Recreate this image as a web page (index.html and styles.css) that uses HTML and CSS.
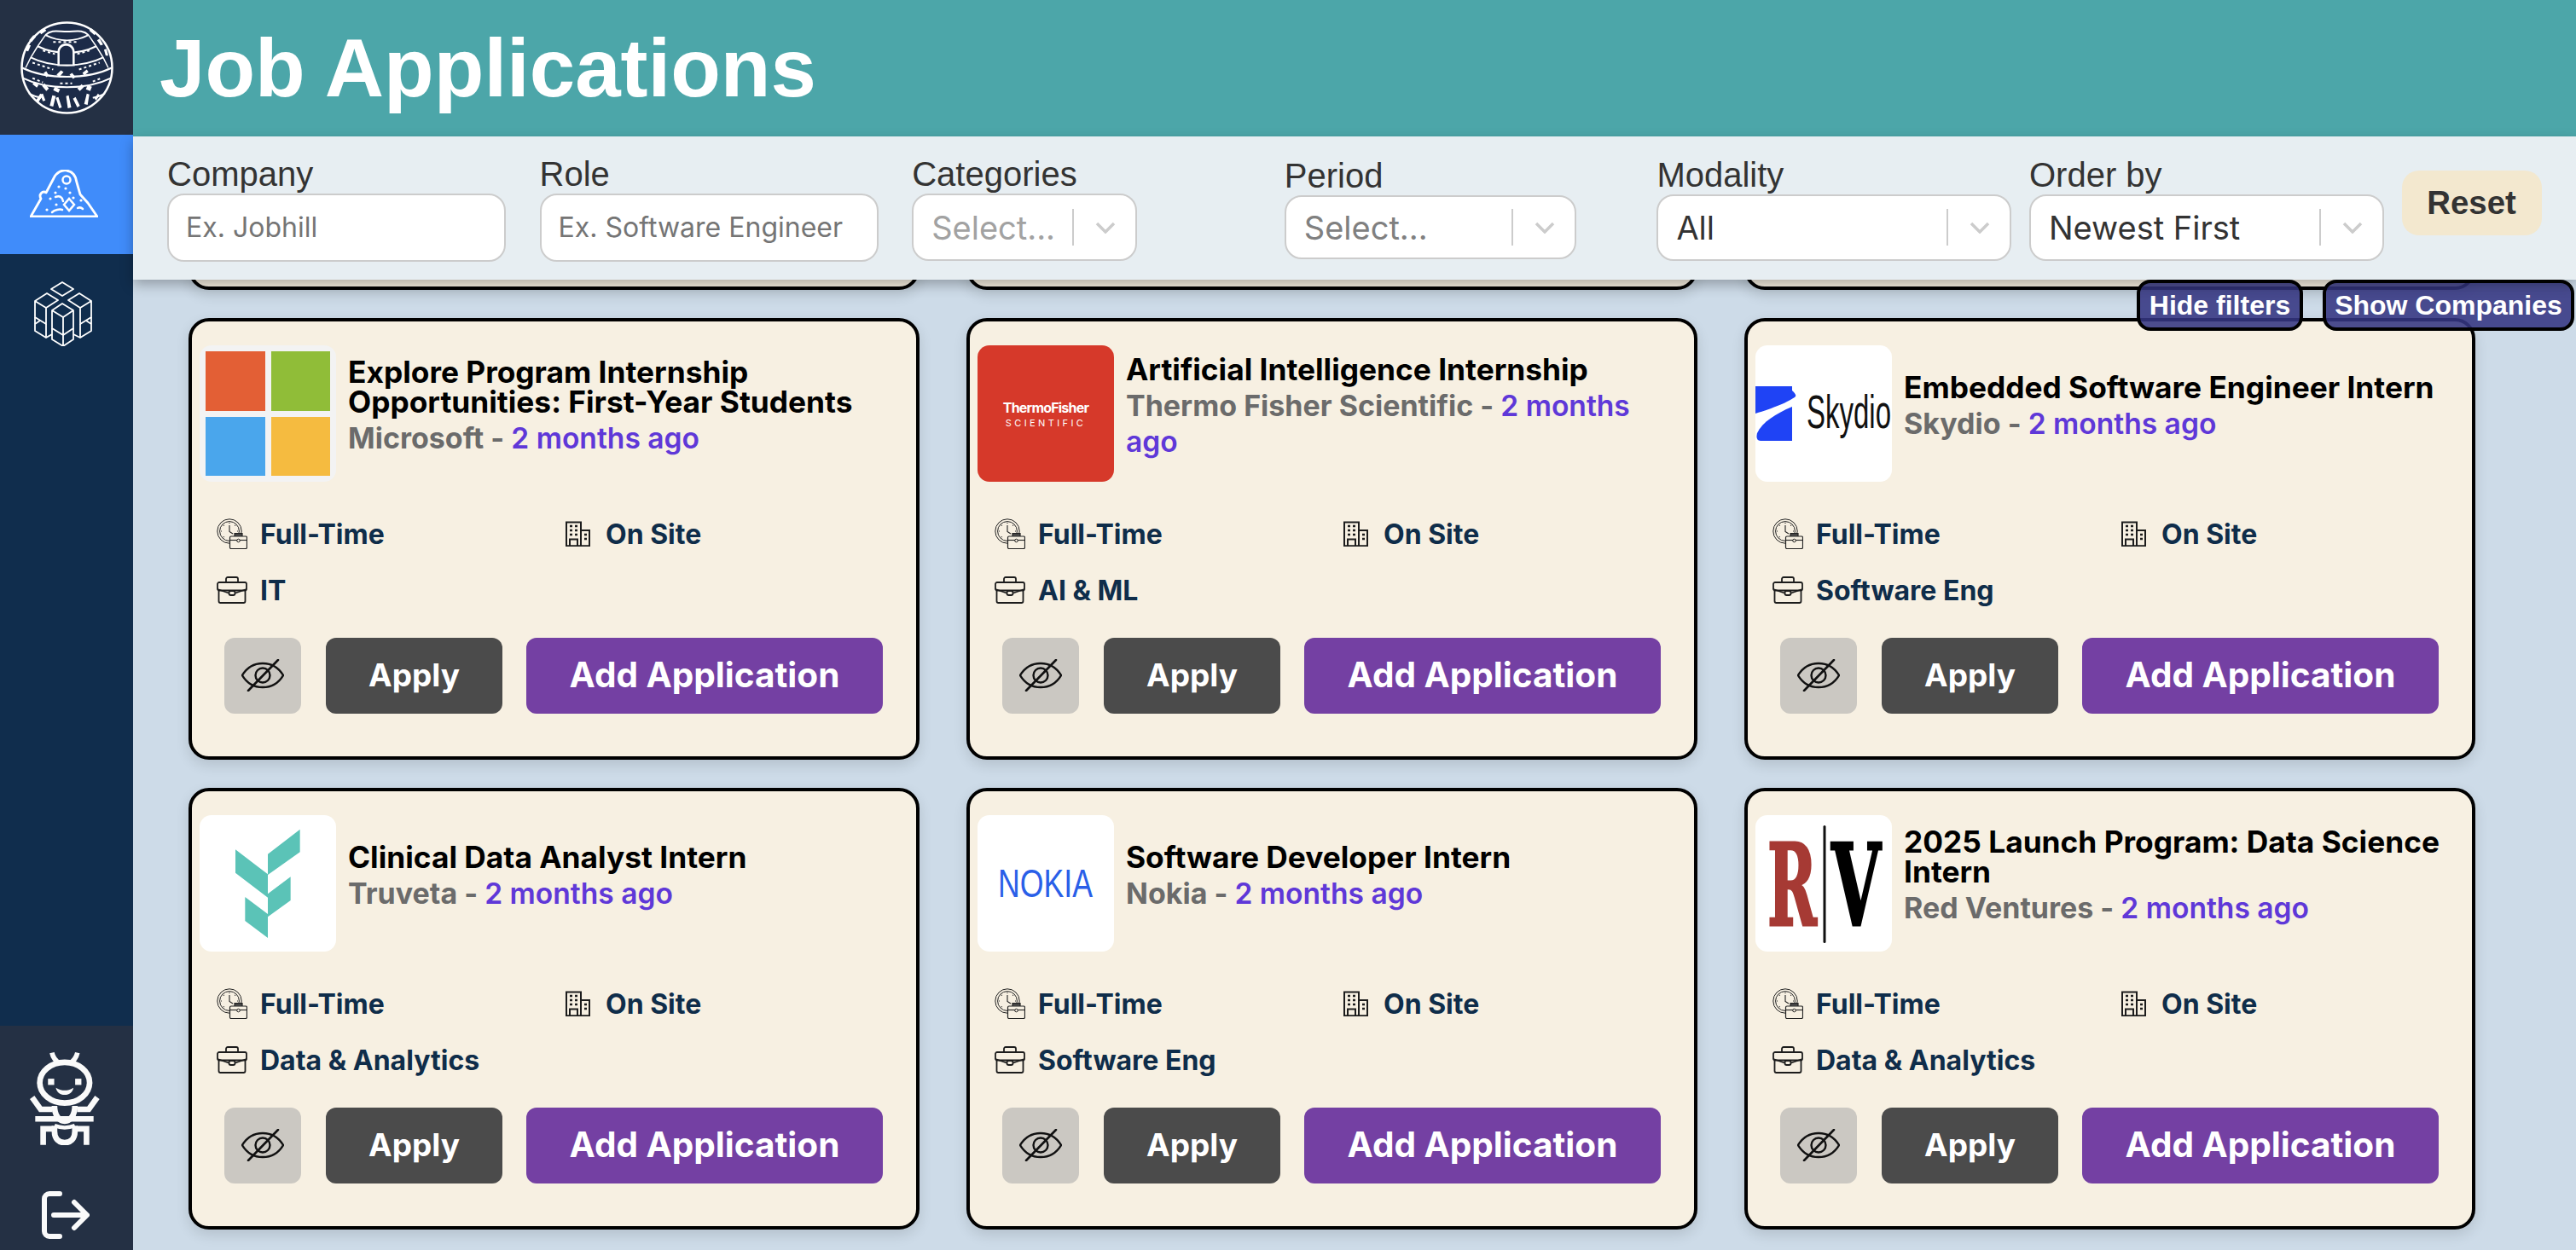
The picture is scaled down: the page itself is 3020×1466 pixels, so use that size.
FILE: index.html
```html
<!DOCTYPE html>
<html lang="en">
<head>
<meta charset="utf-8">
<title>Job Applications</title>
<link rel="stylesheet" href="styles.css">
</head>
<body>
<svg class="sprites" width="0" height="0" aria-hidden="true">
  <defs>
    <symbol id="i-clock" viewBox="0 0 36 36">
      <circle cx="15" cy="15" r="14.2" fill="none" stroke="#222" stroke-width="1"/>
      <circle cx="15" cy="15" r="11.4" fill="none" stroke="#222" stroke-width="1"/>
      <path d="M15 8v7.5l4 2.5M15 5v1M5 15h1M24 15h1M8 8l.7.7M22 8l-.7.7M8 22l.7-.7" fill="none" stroke="#222" stroke-width="1.1"/>
      <rect x="15.5" y="21" width="20" height="14.5" rx="1.5" fill="#f7f0e2" stroke="#222" stroke-width="1.2"/>
      <path d="M21 21v-3.5h9V21" fill="#444" stroke="#222" stroke-width="1.2"/>
      <path d="M15.5 25.5h20" stroke="#222" stroke-width="1.1"/>
      <circle cx="25.5" cy="26" r="1.8" fill="#f7f0e2" stroke="#222" stroke-width="1"/>
    </symbol>
    <symbol id="i-building" viewBox="0 0 29 30">
      <path d="M1 29V1.500h17V29M18 11h10v18M0 29.200h29" fill="none" stroke="#1c1c1c" stroke-width="2"/>
      <path d="M5 6h3M11 6h3M5 11h3M11 11h3M5 16h3M11 16h3M22 16h3M22 21h3" stroke="#1c1c1c" stroke-width="2.400"/>
      <path d="M5 29v-7.500h9V29" fill="none" stroke="#1c1c1c" stroke-width="2"/>
    </symbol>
    <symbol id="i-brief" viewBox="0 0 36 32">
      <path d="M11 7V3a2 2 0 0 1 2-2h10a2 2 0 0 1 2 2v4" fill="none" stroke="#1c1c1c" stroke-width="1.800"/>
      <rect x="1" y="7" width="34" height="9.500" rx="2" fill="none" stroke="#1c1c1c" stroke-width="1.800"/>
      <path d="M2.500 15v14a2 2 0 0 0 2 2h27a2 2 0 0 0 2-2V15" fill="none" stroke="#1c1c1c" stroke-width="1.800"/>
      <path d="M1 15l13 4.500M35 15l-13 4.500" fill="none" stroke="#1c1c1c" stroke-width="1.800"/>
      <rect x="14.500" y="17" width="7" height="5" rx="2" fill="#f7f0e2" stroke="#1c1c1c" stroke-width="1.800"/>
    </symbol>
    <symbol id="i-eye" viewBox="0 0 50 38">
      <path d="M1 19C7 9 15 5 25 5s18 4 24 14c-6 10-14 14-24 14S7 29 1 19Z" fill="none" stroke="#111" stroke-width="2.400" stroke-linejoin="round"/>
      <circle cx="25" cy="19" r="8.500" fill="none" stroke="#111" stroke-width="2.400"/>
      <path d="M43 1L8 37" fill="none" stroke="#111" stroke-width="2.600" stroke-linecap="round"/>
    </symbol>
  </defs>
</svg>

<aside class="sidebar">
  <div class="brand">
    <svg class="brand-logo" viewBox="0 0 108 108">
      <circle cx="54" cy="54" r="52.500" fill="#1c2b48" stroke="#fff" stroke-width="2.500"/>
      <g fill="none" stroke="#fff" stroke-width="2">
        <path d="M2 54c28 14 76 14 104 0M3 66c28 14 74 14 102 0M10 84c6 3 10 4 14 5M84 89c5-1 10-3 14-5"/>
        <path d="M12 42c24 12 60 12 84 0M20 29c20 10 48 10 68 0M29 16c16 8 34 8 50 0"/>
        <path d="M29 16C36 9 44 12 54 12s18-3 25 4"/>
        <path d="M29 16 20 29 12 42 6 54M79 16l9 13 8 13 6 12" stroke-width="1.500"/>
      </g>
      <path d="M43 52V36c0-14 20-14 20 0v16Z" fill="#fff"/>
      <path d="M45.500 50V36c0-10 15-10 15 0v14Z" fill="#1c2b48"/>
      <g fill="none" stroke="#fff" stroke-width="2" stroke-dasharray="3 3">
        <path d="M26 34l14 4M66 38l14-4M14 48l24 8M68 56l24-8M38 24l30 0M14 66l12 5M46 72h14M84 70l10-4"/>
      </g>
      <g fill="#fff">
        <path d="M22 12l6-4 2 3-6 4ZM82 8l6 5-2 3-6-5ZM10 22l5-6 3 2-5 6ZM92 20l4 7-3 1-4-6ZM6 34l3-7 3 1-3 7ZM100 32l2 8-3 0-2-7Z"/>
        <path d="M42 62l5-5 3 2-5 6ZM60 60l4 5-3 2-4-5ZM72 60l5-4 2 3-5 4ZM30 58l3 5-3 2-3-5ZM28 72l5 6-3 3-5-6ZM40 76l6 3-2 4-6-3ZM66 78l5-5 3 3-5 5ZM78 74l5 2-2 5-5-2ZM16 70l5 4-2 3-5-4Z"/>
        <path d="M18 92l5-8 3 2-5 8ZM34 98l3-12 4 1-3 12ZM44 88l4 12-3 1-4-12ZM56 86l3 14-4 1-2-14ZM64 88l5 10-3 2-5-10ZM74 96l3-12 3 1-2 12ZM86 90l4-6 2 2-4 6ZM26 84l3 8-3 1-3-8Z"/>
      </g>
    </svg>
  </div>
  <a class="nav-item nav-active" href="#">
    <svg class="icon-hill" viewBox="0 0 80 56">
      <path d="M1 55 13 34c-3-5 2-10 6-7L28 10C31 3 38 0 43 1c7 1 11 6 12 14l4 14 9 10 11 16Z" fill="none" stroke="#fff" stroke-width="2.800" stroke-linejoin="round"/>
      <circle cx="43" cy="12" r="4.500" fill="none" stroke="#fff" stroke-width="2.500"/>
      <path d="M46 34l6 7-6 7-6-7Z" fill="none" stroke="#fff" stroke-width="2.500"/>
      <path d="M30 32c5-2 8 0 9 5M62 46c-2-2-4-2-6-1M26 50c3-3 9-4 12-3" fill="none" stroke="#fff" stroke-width="2.500" stroke-linecap="round"/>
      <g fill="#fff"><circle cx="34" cy="20" r="1.600"/><circle cx="42" cy="22" r="1.600"/><circle cx="47" cy="27" r="1.600"/><circle cx="30" cy="27" r="1.600"/><circle cx="51" cy="33" r="1.600"/><circle cx="31" cy="41" r="1.600"/><circle cx="24" cy="34" r="1.600"/><circle cx="60" cy="36" r="1.600"/><circle cx="20" cy="47" r="1.600"/></g>
    </svg>
  </a>
  <a class="nav-item" href="#">
    <svg class="icon-cubes" viewBox="0 0 68 76">
      <g fill="none" stroke="#fff" stroke-width="1.800" stroke-linejoin="round">
        <path d="M33 1 46 9 33 17 20 9Z"/>
        <path d="M1 23 15 14l13 8-14 9ZM1 23v19l13 8V31"/>
        <path d="M40 22 53 14l14 9-13 8ZM67 23v19l-13 8V31"/>
        <path d="M21 34 33 26l13 8-12 8ZM21 34v21l13 8 12-8V34M34 42v21"/>
        <path d="M1 42v16l13 8 7-4M67 42v16l-13 8-8-4"/>
        <path d="M1 50l6-4M14 50v16M54 50v16M67 50l-6-4"/>
        <path d="M21 55v13l13 8 12-8V55M34 63v13"/>
      </g>
    </svg>
  </a>
  <div class="sidebar-fill"></div>
  <div class="sidebar-foot">
    <svg class="icon-ant" viewBox="105 158 247 330">
      <g fill="none" stroke="#fafafa" stroke-width="20">
        <ellipse cx="228" cy="268" rx="88" ry="72"/>
        <path d="M183 162c4 18 14 30 28 38M273 162c-4 18-14 30-28 38" stroke-width="17"/>
        <path d="M113 320l30 42h42M343 320l-30 42h-41"/>
        <path d="M124 396h206"/>
        <path d="M192 350c0 32 16 54 36 54s36-22 36-54"/>
        <path d="M192 420q36 14 72 0" stroke-width="14"/>
        <path d="M192 420v20c0 28 16 40 36 40s36-12 36-40v-20"/>
        <path d="M152 488v-57h34M305 488v-57h-34"/>
      </g>
      <rect x="169" y="254" width="22" height="22" fill="#fafafa"/>
      <rect x="265" y="254" width="22" height="22" fill="#fafafa"/>
      <path d="M197 286c12 8 22 9 31 9s20-1 31-9c-2 14-14 25-31 25s-29-11-31-25Z" fill="#fafafa"/>
    </svg>
    <svg class="icon-logout" viewBox="0 0 56 56">
      <path d="M21 3H9a6 6 0 0 0-6 6v38a6 6 0 0 0 6 6h12" fill="none" stroke="#fafafa" stroke-width="6" stroke-linecap="round"/>
      <path d="M14 28h38M38 13l15 15-15 15" fill="none" stroke="#fafafa" stroke-width="6" stroke-linecap="round" stroke-linejoin="round"/>
    </svg>
  </div>
</aside>

<main class="main">
  <header class="topbar"><h1 class="page-title">Job Applications</h1></header>

  <section class="filters">
    <div class="field">
      <label class="field-label">Company</label>
      <input class="text-input" placeholder="Ex. Jobhill">
    </div>
    <div class="field">
      <label class="field-label">Role</label>
      <input class="text-input" placeholder="Ex. Software Engineer">
    </div>
    <div class="field">
      <label class="field-label">Categories</label>
      <div class="select select-cat"><span class="select-value muted-light">Select...</span><span class="select-sep"></span><svg class="chev" viewBox="0 0 24 14"><path d="M2 2l10 10L22 2" fill="none" stroke="#ccc" stroke-width="3.500"/></svg></div>
    </div>
    <div class="field">
      <label class="field-label">Period</label>
      <div class="select select-period"><span class="select-value muted">Select...</span><span class="select-sep"></span><svg class="chev" viewBox="0 0 24 14"><path d="M2 2l10 10L22 2" fill="none" stroke="#ccc" stroke-width="3.500"/></svg></div>
    </div>
    <div class="field">
      <label class="field-label">Modality</label>
      <div class="select select-wide"><span class="select-value">All</span><span class="select-sep"></span><svg class="chev" viewBox="0 0 24 14"><path d="M2 2l10 10L22 2" fill="none" stroke="#ccc" stroke-width="3.500"/></svg></div>
    </div>
    <div class="field">
      <label class="field-label">Order by</label>
      <div class="select select-wide"><span class="select-value">Newest First</span><span class="select-sep"></span><svg class="chev" viewBox="0 0 24 14"><path d="M2 2l10 10L22 2" fill="none" stroke="#ccc" stroke-width="3.500"/></svg></div>
    </div>
    <button class="reset-btn">Reset</button>
  </section>

  <section class="content">
    <div class="floating">
      <button class="float-btn float-hide">Hide filters</button>
      <button class="float-btn float-show">Show Companies</button>
    </div>
    <div class="card-grid">
      <article class="card"></article>
      <article class="card"></article>
      <article class="card"></article>

      <article class="card">
        <div class="card-head">
          <div class="logo logo-ms"><svg viewBox="0 0 160 160"><rect x="7" y="7" width="70" height="70" fill="#e35f35"/><rect x="84" y="7" width="69" height="70" fill="#90bd38"/><rect x="7" y="84" width="70" height="69" fill="#4aa6ec"/><rect x="84" y="84" width="69" height="69" fill="#f5bb40"/></svg></div>
          <div class="card-text">
            <h2 class="job-title">Explore Program Internship Opportunities: First-Year Students</h2>
            <p class="job-sub"><span class="company">Microsoft - </span><span class="ago">2 months ago</span></p>
          </div>
        </div>
        <div class="meta">
          <div class="meta-item"><svg class="mi mi-clock"><use href="#i-clock"/></svg>Full-Time</div>
          <div class="meta-item"><svg class="mi mi-building"><use href="#i-building"/></svg>On Site</div>
          <div class="meta-item"><svg class="mi mi-brief"><use href="#i-brief"/></svg>IT</div>
        </div>
        <div class="actions">
          <button class="btn-eye"><svg class="eye"><use href="#i-eye"/></svg></button>
          <button class="btn-apply">Apply</button>
          <button class="btn-add">Add Application</button>
        </div>
      </article>

      <article class="card">
        <div class="card-head">
          <div class="logo logo-thermo"><span class="thermo-a">ThermoFisher</span><span class="thermo-b">SCIENTIFIC</span></div>
          <div class="card-text">
            <h2 class="job-title">Artificial Intelligence Internship</h2>
            <p class="job-sub"><span class="company">Thermo Fisher Scientific - </span><span class="ago">2 months ago</span></p>
          </div>
        </div>
        <div class="meta">
          <div class="meta-item"><svg class="mi mi-clock"><use href="#i-clock"/></svg>Full-Time</div>
          <div class="meta-item"><svg class="mi mi-building"><use href="#i-building"/></svg>On Site</div>
          <div class="meta-item"><svg class="mi mi-brief"><use href="#i-brief"/></svg>AI &amp; ML</div>
        </div>
        <div class="actions">
          <button class="btn-eye"><svg class="eye"><use href="#i-eye"/></svg></button>
          <button class="btn-apply">Apply</button>
          <button class="btn-add">Add Application</button>
        </div>
      </article>

      <article class="card">
        <div class="card-head">
          <div class="logo"><svg viewBox="0 0 160 160">
            <path d="M0 48H43V53C46 56 48 58 47 60 40 66 20 74 0 80Z" fill="#1f43f5"/>
            <path d="M43 72V112H6C1 112 1 107 2 103 8 90 24 80 43 72Z" fill="#1f43f5"/>
            <text class="svg-sky" x="60" y="97" textLength="99" lengthAdjust="spacingAndGlyphs">Skydio</text>
          </svg></div>
          <div class="card-text">
            <h2 class="job-title">Embedded Software Engineer Intern</h2>
            <p class="job-sub"><span class="company">Skydio - </span><span class="ago">2 months ago</span></p>
          </div>
        </div>
        <div class="meta">
          <div class="meta-item"><svg class="mi mi-clock"><use href="#i-clock"/></svg>Full-Time</div>
          <div class="meta-item"><svg class="mi mi-building"><use href="#i-building"/></svg>On Site</div>
          <div class="meta-item"><svg class="mi mi-brief"><use href="#i-brief"/></svg>Software Eng</div>
        </div>
        <div class="actions">
          <button class="btn-eye"><svg class="eye"><use href="#i-eye"/></svg></button>
          <button class="btn-apply">Apply</button>
          <button class="btn-add">Add Application</button>
        </div>
      </article>

      <article class="card">
        <div class="card-head">
          <div class="logo"><svg viewBox="42 45 480 480">
            <path d="M282 182 395 95V175L282 255ZM168 166 282 253V335L168 248ZM282 322 362 262V345L282 403ZM202 333 282 393V477L202 417Z" fill="#5bc3b7"/>
          </svg></div>
          <div class="card-text">
            <h2 class="job-title">Clinical Data Analyst Intern</h2>
            <p class="job-sub"><span class="company">Truveta - </span><span class="ago">2 months ago</span></p>
          </div>
        </div>
        <div class="meta">
          <div class="meta-item"><svg class="mi mi-clock"><use href="#i-clock"/></svg>Full-Time</div>
          <div class="meta-item"><svg class="mi mi-building"><use href="#i-building"/></svg>On Site</div>
          <div class="meta-item"><svg class="mi mi-brief"><use href="#i-brief"/></svg>Data &amp; Analytics</div>
        </div>
        <div class="actions">
          <button class="btn-eye"><svg class="eye"><use href="#i-eye"/></svg></button>
          <button class="btn-apply">Apply</button>
          <button class="btn-add">Add Application</button>
        </div>
      </article>

      <article class="card">
        <div class="card-head">
          <div class="logo"><svg viewBox="0 0 160 160">
            <text class="svg-nokia" x="24" y="96" textLength="111" lengthAdjust="spacingAndGlyphs">NOKIA</text>
          </svg></div>
          <div class="card-text">
            <h2 class="job-title">Software Developer Intern</h2>
            <p class="job-sub"><span class="company">Nokia - </span><span class="ago">2 months ago</span></p>
          </div>
        </div>
        <div class="meta">
          <div class="meta-item"><svg class="mi mi-clock"><use href="#i-clock"/></svg>Full-Time</div>
          <div class="meta-item"><svg class="mi mi-building"><use href="#i-building"/></svg>On Site</div>
          <div class="meta-item"><svg class="mi mi-brief"><use href="#i-brief"/></svg>Software Eng</div>
        </div>
        <div class="actions">
          <button class="btn-eye"><svg class="eye"><use href="#i-eye"/></svg></button>
          <button class="btn-apply">Apply</button>
          <button class="btn-add">Add Application</button>
        </div>
      </article>

      <article class="card">
        <div class="card-head">
          <div class="logo"><svg viewBox="0 0 160 160">
            <text class="svg-rv svg-r" x="14" y="129" textLength="58" lengthAdjust="spacingAndGlyphs">R</text>
            <rect x="79.500" y="12" width="3" height="138" rx="1.500" fill="#111"/>
            <text class="svg-rv svg-v" x="89" y="129" textLength="58" lengthAdjust="spacingAndGlyphs">V</text>
          </svg></div>
          <div class="card-text">
            <h2 class="job-title">2025 Launch Program: Data Science Intern</h2>
            <p class="job-sub"><span class="company">Red Ventures - </span><span class="ago">2 months ago</span></p>
          </div>
        </div>
        <div class="meta">
          <div class="meta-item"><svg class="mi mi-clock"><use href="#i-clock"/></svg>Full-Time</div>
          <div class="meta-item"><svg class="mi mi-building"><use href="#i-building"/></svg>On Site</div>
          <div class="meta-item"><svg class="mi mi-brief"><use href="#i-brief"/></svg>Data &amp; Analytics</div>
        </div>
        <div class="actions">
          <button class="btn-eye"><svg class="eye"><use href="#i-eye"/></svg></button>
          <button class="btn-apply">Apply</button>
          <button class="btn-add">Add Application</button>
        </div>
      </article>
    </div>
  </section>
</main>
</body>
</html>
```
FILE: styles.css
```css
* { box-sizing: border-box; }
html, body { height: 100%; }
body {
  margin: 0;
  display: flex;
  height: 100vh;
  overflow: hidden;
  font-family: Inter, "Liberation Sans", sans-serif;
  background: #cddbe8;
}
.sprites { position: absolute; }

/* Sidebar */
.sidebar { width: 156px; flex: none; display: flex; flex-direction: column; background: #102d4d; }
.brand { height: 158px; background: #243044; display: flex; align-items: center; justify-content: center; }
.brand-logo { width: 109px; height: 109px; }
.nav-item { height: 140px; display: flex; align-items: center; justify-content: center; }
.nav-active { background: #408cfa; }
.icon-hill { width: 80px; height: 56px; margin: -2px 6px 0 0; }
.icon-cubes { width: 68px; height: 76px; margin-right: 9px; }
.sidebar-fill { flex: 1; }
.sidebar-foot { height: 263px; background: #243044; display: flex; flex-direction: column; align-items: center; padding-top: 30px; }
.icon-ant { width: 82px; height: 110px; margin-right: 4px; }
.icon-logout { width: 56px; height: 56px; margin: 54px 3px 0 0; }

/* Main */
.main { flex: 1; min-width: 0; display: flex; flex-direction: column; }
.topbar { height: 160px; flex: none; background: #4ca6a9; display: flex; align-items: center; padding-left: 31px; }
.page-title { margin: 0; color: #fff; font: 700 96px/1 "Liberation Sans", Arial, sans-serif; }

/* Filters */
.filters {
  height: 168px; flex: none; background: #e7eef2; position: relative; z-index: 2;
  box-shadow: 0 6px 14px rgba(0,0,0,.28);
  display: grid; grid-template-columns: repeat(6, 436.6px) 162px; align-items: center; padding-left: 40px;
}
.field { display: flex; flex-direction: column; }
.field-label { font: 40px/46px "Liberation Sans", Arial, sans-serif; color: #333; margin-top: -1px; }
.text-input {
  width: 397px; height: 80px; border: 2.5px solid #ccc; border-radius: 20px; background: #fff;
  padding: 0 20px; font: 32px Inter, sans-serif; outline: none;
}
.text-input::placeholder { color: #757575; opacity: 1; }
.select {
  display: flex; align-items: center; background: #fff; border: 2.5px solid #ccc; border-radius: 20px;
  padding-left: 21px; height: 79px;
}
.select-cat { width: 264px; }
.select-period { width: 342px; height: 75px; }
.select-wide { width: 416px; height: 78px; }
.select-value { flex: 1; font-size: 38px; color: #333; white-space: nowrap; }
.muted { color: #808080; }
.muted-light { color: #a2a2a2; }
.select-sep { width: 2px; height: 43px; background: #ccc; }
.chev { width: 24px; height: 14px; margin: 0 23px 0 25px; }
.reset-btn {
  width: 164px; height: 76px; margin-bottom: 12px; border: 0; border-radius: 20px; background: #f3e8cf;
  color: #333; font: 700 38.4px "Liberation Sans", Arial, sans-serif; padding: 0;
}

/* Content */
.content { flex: 1; min-height: 0; position: relative; overflow: hidden; padding-left: 65px; }
.floating { position: absolute; top: 0; right: 2px; z-index: 1; display: flex; gap: 23px; }
.float-btn {
  height: 60px; border: 4px solid #000; border-radius: 16px; background: rgba(52,54,130,.88);
  color: #fff; font: 700 32px "Liberation Sans", Arial, sans-serif; padding: 0;
}
.float-hide { width: 195px; }
.float-show { width: 295px; }
.card-grid {
  display: grid; grid-template-columns: repeat(3, 857px); grid-auto-rows: 518px; column-gap: 55px; row-gap: 33px;
  margin-top: -506px;
}
.card {
  background: #f7f0e2; border: 4px solid #000; border-radius: 24px; padding: 28px 9px 0;
  box-shadow: 0 6px 16px rgba(0,0,0,.12);
}
.card-head { display: flex; align-items: center; gap: 14px; height: 160px; }
.logo {
  width: 160px; height: 160px; flex: none; background: #fff; border-radius: 14px; overflow: hidden;
}
.logo svg { display: block; width: 160px; height: 160px; }
.logo-ms { background: #f3f3f3; }
.logo-thermo {
  background: #d6392a; color: #fff; display: flex; flex-direction: column; align-items: center; justify-content: center;
}
.thermo-a { font-size: 16px; font-weight: 700; line-height: 20px; letter-spacing: -.8px; }
.thermo-b { font-size: 11px; line-height: 12px; letter-spacing: 3.4px; margin-top: 2px; }
.card-text { min-width: 0; padding-bottom: 16px; }
.job-title { margin: 0; font-size: 35.3px; font-weight: 700; line-height: 35px; color: #000; }
.job-sub { margin: 4px 0 0; font-size: 34px; font-weight: 600; line-height: 42px; }
.company { color: #6b6b6b; font-weight: 700; }
.ago { color: #5f38d8; font-size: 33.6px; }
.svg-sky { font-family: "Liberation Sans", sans-serif; font-size: 55px; fill: #111; }
.svg-nokia { font-family: "Liberation Sans", sans-serif; font-size: 47px; fill: #2a5fe8; }
.svg-rv { font-family: "DejaVu Serif", serif; font-weight: 700; font-size: 133px; stroke-width: 3px; }
.svg-r { fill: #a63a34; stroke: #a63a34; }
.svg-v { fill: #000; stroke: #000; }

.meta {
  display: grid; grid-template-columns: 409px 1fr; grid-auto-rows: 44px; row-gap: 22px;
  margin-top: 39px; padding-left: 20px;
}
.meta-item { display: flex; align-items: center; font-size: 32px; font-weight: 700; color: #0f2d4a; white-space: nowrap; }
.mi { flex: none; display: block; }
.mi-clock { width: 36px; height: 36px; margin-right: 15px; }
.mi-building { width: 29px; height: 30px; margin-right: 18px; }
.mi-brief { width: 36px; height: 32px; margin-right: 15px; }

.actions { display: flex; margin-top: 34px; padding-left: 29px; }
.actions button { height: 89px; border: 0; border-radius: 12px; padding: 0 0 2px; color: #fff; font-family: Inter, sans-serif; }
.btn-eye { width: 90px; background: #cbc8c2; display: flex; align-items: center; justify-content: center; }
.eye { width: 50px; height: 38px; display: block; }
.btn-apply { width: 207px; margin-left: 29px; background: #4b4b4b; font-size: 37px; font-weight: 700; }
.btn-add { width: 418px; margin-left: 28px; background: #7440a3; font-size: 40.5px; font-weight: 700; }
```
